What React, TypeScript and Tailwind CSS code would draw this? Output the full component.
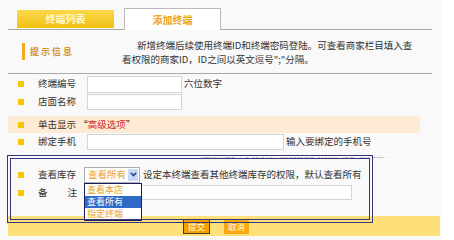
const font = "font-['Noto_Sans_CJK_SC','Liberation_Sans',sans-serif]";

const Bullet = () => <span className="ml-[10px] mr-[14px] w-[6px] h-[6px] bg-[#f6c700] shrink-0" />;

const Row = ({ label, children, className = "" }: { label: React.ReactNode; children?: React.ReactNode; className?: string }) => (
    <div className={`flex items-center h-[17px] ${className}`}>
        <Bullet />
        <div className="w-[49px] shrink-0">{label}</div>
        {children}
    </div>
);

const Input = ({ w, h = "h-[17px]" }: { w: string; h?: string }) => (
    <div className={`${w} ${h} bg-white border border-[#d4d4d4] shrink-0`} />
);

export default function App() {
    return (
        <div className={`relative w-[454px] h-[240px] bg-white overflow-hidden text-[9.5px] leading-none text-[#333] ${font}`}>
            <div className="w-[442px] h-[240px] bg-[#f9f9f9]">
                {/* tabs */}
                <div className="pt-[8px] px-[8px]">
                    <div className="w-[424px] h-[22px] border-b border-[#a9a9a9] flex items-end pl-[9px] gap-[10px]">
                        <div className="w-[97px] h-[18px] mb-[1px] bg-gradient-to-b from-[#fbd84a] to-[#f2c100] flex items-center justify-center text-[#fff8d8] font-bold text-[10px]">
                            终端列表
                        </div>
                        <div className="w-[97px] h-[22px] -mb-px bg-white border border-b-0 border-[#b9b9b9] flex items-center justify-center text-[#eea21a] font-bold text-[10px]">
                            添加终端
                        </div>
                    </div>
                </div>

                {/* tips */}
                <div className="mx-[8px] w-[424px] h-[44px] border-b border-[#aaaaaa] flex">
                    <div className="w-[114px] shrink-0">
                        <div className="flex items-center ml-[14px] mt-[13px] h-[17px]">
                            <span className="w-[3px] h-[17px] bg-[#f5a623]" />
                            <span className="ml-[5px] text-[9px] font-bold tracking-[2px] text-[#d8901c]">提示信息</span>
                        </div>
                    </div>
                    <div className="pt-[8px] leading-[14px] whitespace-nowrap">
                        <div className="pl-[15px]">新增终端后续使用终端ID和终端密码登陆。可查看商家栏目填入查</div>
                        <div>看权限的商家ID，ID之间以英文逗号";"分隔。</div>
                    </div>
                </div>

                {/* form */}
                <div className="mx-[8px] pt-[1px]">
                    <Row label="终端编号" className="h-[18px]">
                        <Input w="w-[95px]" />
                        <span className="ml-[2px]">六位数字</span>
                    </Row>
                    <Row label="店面名称">
                        <Input w="w-[95px]" h="h-[16px]" />
                    </Row>
                    <Row
                        label={
                            <span className="whitespace-nowrap">
                                单击显示 “<span className="text-[#d8261c]">高级选项</span>”
                            </span>
                        }
                        className="mt-[6px] w-[412px] bg-[#fdebd6]"
                    />
                    <Row label="绑定手机">
                        <Input w="w-[197px]" h="h-[16px]" />
                        <span className="ml-[2px]">输入要绑定的手机号</span>
                    </Row>

                    <div className="h-[16px] overflow-hidden pl-[192px]">
                        <div className="mt-[7px] h-[4px] overflow-hidden">
                            <div className="-mt-[6px] text-[7px] text-[#9a9a9a] whitespace-nowrap">
                                (如需绑定多个手机号码，请用英文逗号分隔，最多可绑定五个)
                            </div>
                        </div>
                    </div>

                    <Row label="查看库存" className="h-[16px]">
                        <div className="w-[56px] h-[16px] -ml-[3px] bg-white border border-[#a7aeb8] flex items-center justify-between">
                            <span className="pl-[3px] text-[#e8a030]">查看所有</span>
                            <span className="w-[10px] h-[12px] mr-px bg-[#c9daf6] flex items-center justify-center">
                                <svg width="7" height="5" viewBox="0 0 7 5">
                                    <path d="M0.8 0.8 L3.5 3.6 L6.2 0.8" fill="none" stroke="#23408f" strokeWidth="1.6" />
                                </svg>
                            </span>
                        </div>
                        <span className="ml-[3px] whitespace-nowrap">设定本终端查看其他终端库存的权限，默认查看所有</span>
                    </Row>
                    <Row label={<span className="flex justify-between w-[39px]"><span>备</span><span>注</span></span>} className="h-[16px] mt-px">
                        <div className="w-[268px] h-[15px] -ml-[3px] bg-white border border-[#d4d4d4]" />
                    </Row>
                </div>

                {/* footer */}
                <div className="mt-[15px] mx-[8px] w-[432px] h-[20px] bg-[#fde07a] flex items-start pt-[3px] pl-[175px] gap-[14px]">
                    <button className="w-[27px] h-[15px] bg-[#f5a200] border border-[#4d3b1c] text-white text-[8.5px] leading-none">提交</button>
                    <button className="w-[25px] h-[15px] bg-[#f6aa12] text-white text-[8.5px] leading-none">取消</button>
                </div>
            </div>

            {/* open dropdown */}
            <div className="absolute left-[84px] top-[183px] w-[58px] bg-white border border-[#1c1c5c] text-[#e8a030] text-[9px] leading-[12px]">
                <div className="h-[12px] pl-[2px]">查看本店</div>
                <div className="h-[12px] pl-[2px] bg-[#3169c6] text-white">查看所有</div>
                <div className="h-[12px] pl-[2px]">指定终端</div>
            </div>

            {/* highlight frame */}
            <div className="absolute left-[7px] top-[155px] w-[366px] h-[68px] border-[4px] border-double border-[#35357a]" />
        </div>
    );
}
